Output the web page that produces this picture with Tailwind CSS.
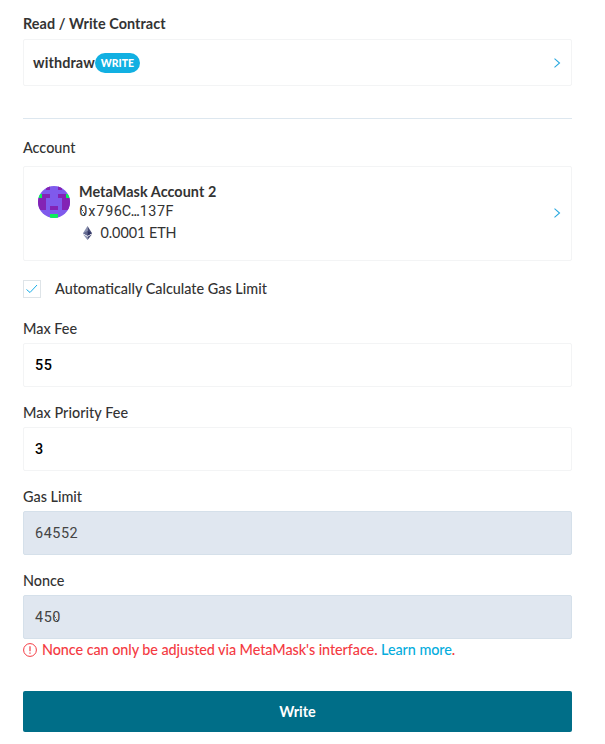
<!DOCTYPE html>
<html lang="en">
<head>
<meta charset="utf-8">
<title>Write Contract</title>
<script src="https://cdn.jsdelivr.net/npm/@tailwindcss/browser@4"></script>
</head>
<body class="bg-white font-['Lato',sans-serif] text-[14.4px] leading-5 text-[#333] font-medium">
<main class="flex w-[572px] flex-col pl-[23px] pt-[14px]">
  <h1 class="font-bold tracking-[.06px]">Read / Write Contract</h1>
  <div class="mt-[5px] flex h-[47px] items-center justify-between rounded-xs border border-[#f3f4f5] pl-[9px] pr-[10px]">
    <div class="flex items-center"><span class="font-bold tracking-[.12px]">withdraw</span><span class="flex h-5 w-[45px] items-center justify-center rounded-full bg-[#11b0e2] text-[10.4px] font-black text-white">WRITE</span></div>
    <svg class="h-[10px] w-[8px]" viewBox="0 0 8 10" fill="none" stroke="#2aa9df" stroke-width="1.1"><path d="M1.5.7 6.5 5l-5 4.3"/></svg>
  </div>
  <hr class="mt-8 border-[#dde7ef]">
  <h2 class="mt-[19px]">Account</h2>
  <div class="mt-2 flex h-[95px] items-center justify-between rounded-xs border border-[#f3f4f5] pl-[14px] pr-[10px]">
    <div class="flex h-[62px] gap-[9px]">
      <svg class="mt-[3px] size-8 rounded-full" viewBox="0 0 8 8" shape-rendering="crispEdges">
        <path fill="#7f5aec" d="M0 0h8v8H0z"/>
        <path fill="#8323b5" d="M2 0h1v1H2zM5 0h1v1H5zM1 2h2v1H1zM5 2h2v1H5zM0 3h2v2H0zM6 3h2v2H6zM0 5h2v1H0zM3 5h2v1H3zM6 5h2v1H6z"/>
        <path fill="#0cf05b" d="M0 2h1v1H0zM7 2h1v1H7zM3 7h2v1H3z"/>
      </svg>
      <div>
        <div class="-mt-px font-bold leading-5 tracking-[.06px]">MetaMask Account 2</div>
        <div class="flex font-['Roboto',sans-serif] font-normal leading-5 *:flex *:w-[8.64px] *:justify-center"><span class="bg-[linear-gradient(to_bottom_left,transparent_44%,#555_45%,#555_55%,transparent_56%)] bg-[length:4px_7px] bg-center bg-no-repeat">0</span><span>x</span><span>7</span><span>9</span><span>6</span><span>C</span><span class="text-[12px] font-bold">…</span><span>1</span><span>3</span><span>7</span><span>F</span></div>
        <div class="mt-px flex items-center font-normal">
          <svg class="ml-[4px] mr-[5px] h-[14px] w-[9px]" viewBox="0 0 9 14"><path fill="#8a92b2" d="M4.5 0 0 7.2l4.5 2.5z"/><path fill="#454a75" d="m4.5 0 4.5 7.2-4.5 2.5z"/><path fill="#62688f" d="M0 7.2 4.5 5v4.7z"/><path fill="#303564" d="M9 7.2 4.5 5v4.7z"/><path fill="#8a92b2" d="m0 8.2 4.5 2.6V14z"/><path fill="#454a75" d="m9 8.2-4.5 2.6V14z"/></svg>
          <span class="ml-[3.500px] tracking-[-.06px]">0.0001 ETH</span>
        </div>
      </div>
    </div>
    <svg class="mb-px h-[10px] w-[8px]" viewBox="0 0 8 10" fill="none" stroke="#2aa9df" stroke-width="1.1"><path d="M1.5.7 6.5 5l-5 4.3"/></svg>
  </div>
  <div class="mt-[18px] flex h-5 items-center gap-[14px]">
    <span class="flex size-[18px] items-center justify-center border border-[#dee4e8]"><svg class="h-3 w-3" viewBox="0 0 12 12" fill="none" stroke="#19aee8"><path d="m.5 6.5 3.500 3 7-7.500"/></svg></span>
    <span>Automatically Calculate Gas Limit</span>
  </div>
  <label class="mt-5">Max Fee</label>
  <div class="mt-1 flex h-11 items-center rounded-xs border border-[#f3f4f5] pl-[11px] pt-[2px] font-['Roboto',sans-serif] tracking-[.55px] text-black">55</div>
  <label class="mt-4 tracking-[.05px]">Max Priority Fee</label>
  <div class="mt-1 flex h-11 items-center rounded-xs border border-[#f3f4f5] pl-[11px] pt-[2px] font-['Roboto',sans-serif] tracking-[.55px] text-black">3</div>
  <label class="mt-4">Gas Limit</label>
  <div class="mt-1 flex h-11 items-center rounded-xs border border-[#d5e0ea] bg-[#e0e7f0] pl-[11px] pt-[2px] font-['Roboto',sans-serif] font-normal tracking-[.55px] text-[#444]">64552</div>
  <label class="mt-4">Nonce</label>
  <div class="mt-1 flex h-11 items-center rounded-xs border border-[#d5e0ea] bg-[#e0e7f0] pl-[11px] pt-[2px] font-['Roboto',sans-serif] font-normal tracking-[.55px] text-[#444]">45<span class="bg-[linear-gradient(to_bottom_left,transparent_44%,#666_45%,#666_55%,transparent_56%)] bg-[length:4px_7px] bg-[position:2px_center] bg-no-repeat">0</span></div>
  <div class="mt-px flex items-center gap-[5px] text-[#f43b43]">
    <svg class="size-[14px]" viewBox="0 0 14 14" fill="none" stroke="currentColor"><circle cx="7" cy="7" r="6.400"/><path d="M7 3.300v5" stroke-width="1.200"/><path d="M7 9.500v1.200" stroke-width="1.200"/></svg>
    <p class="tracking-[-.065px]">Nonce can only be adjusted via MetaMask's interface. <a class="text-[#05addd]">Learn more</a>.</p>
  </div>
  <button class="mt-[31px] h-[41px] rounded-xs bg-[#006e88] font-bold text-white">Write</button>
</main>
</body>
</html>
